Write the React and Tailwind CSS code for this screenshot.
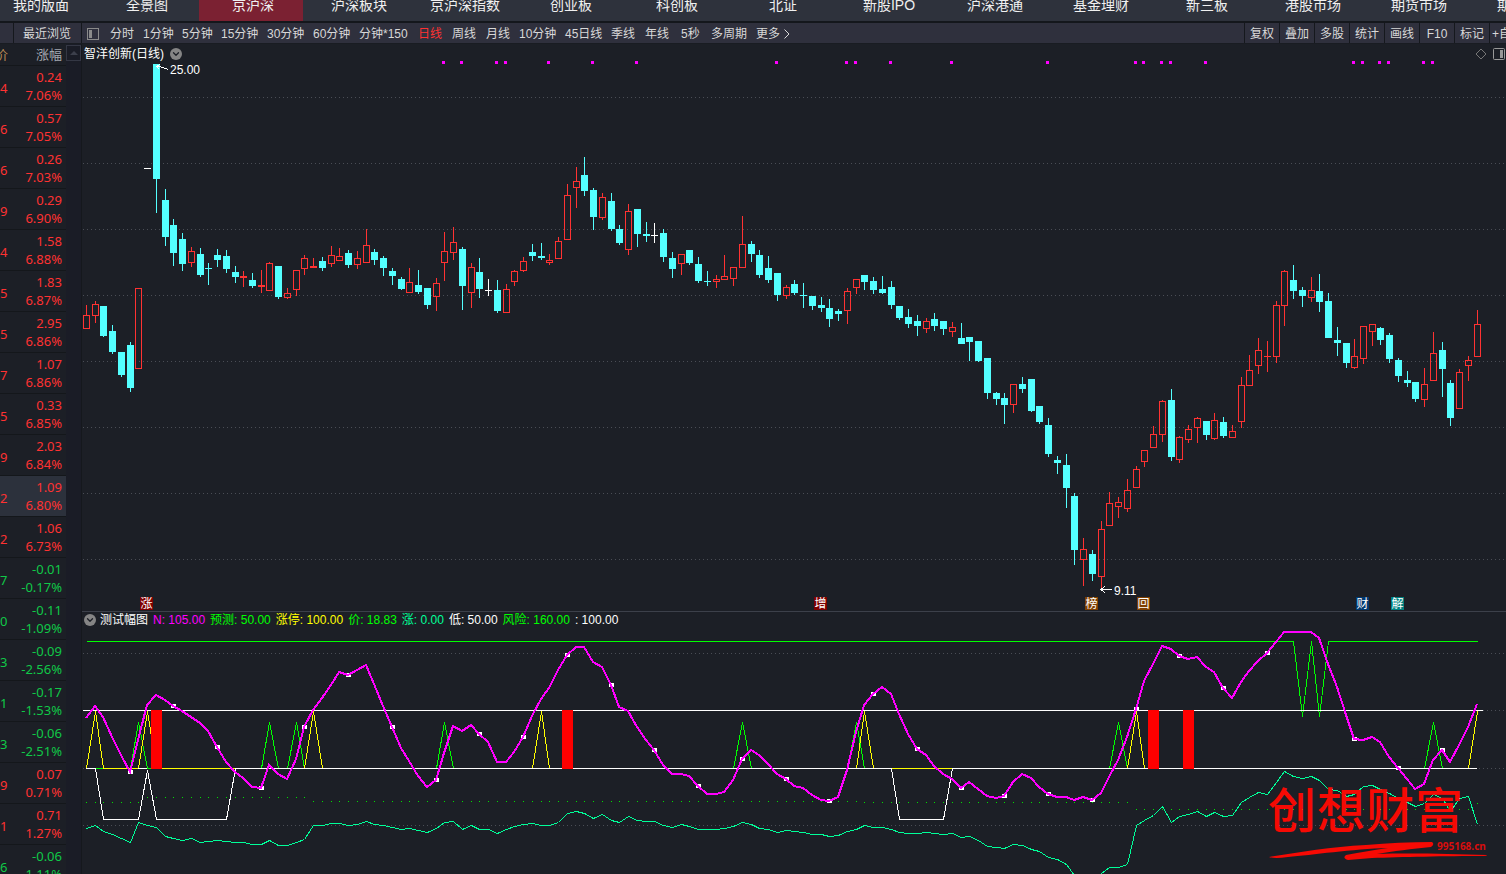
import { ChevronDown } from 'lucide-react';

const markets = [
  '我的版面', '全景图', '京沪深', '沪深板块', '京沪深指数', '创业板', '科创板', '北证',
  '新股IPO', '沪深港通', '基金理财', '新三板', '港股市场', '期货市场', '期权市场',
];

const periods = [
  ['分时', 'w-[33px]'], ['1分钟', 'w-[39px]'], ['5分钟', 'w-[39px]'], ['15分钟', 'w-[46px]'],
  ['30分钟', 'w-[46px]'], ['60分钟', 'w-[46px]'], ['分钟*150', 'w-[59px]'], ['日线', 'w-[34px]'],
  ['周线', 'w-[34px]'], ['月线', 'w-[33px]'], ['10分钟', 'w-[46px]'], ['45日线', 'w-[46px]'],
  ['季线', 'w-[34px]'], ['年线', 'w-[36px]'], ['5秒', 'w-[30px]'], ['多周期', 'w-[45px]'],
];

const tools = ['复权', '叠加', '多股', '统计', '画线', 'F10', '标记', '+自'];

// [last digit of price, change, change %]
const quotes = [
  ['4', '0.24', '7.06%'], ['6', '0.57', '7.05%'], ['6', '0.26', '7.03%'], ['9', '0.29', '6.90%'],
  ['4', '1.58', '6.88%'], ['5', '1.83', '6.87%'], ['5', '2.95', '6.86%'], ['7', '1.07', '6.86%'],
  ['5', '0.33', '6.85%'], ['9', '2.03', '6.84%'], ['2', '1.09', '6.80%'], ['2', '1.06', '6.73%'],
  ['7', '-0.01', '-0.17%'], ['0', '-0.11', '-1.09%'], ['3', '-0.09', '-2.56%'], ['1', '-0.17', '-1.53%'],
  ['3', '-0.06', '-2.51%'], ['9', '0.07', '0.71%'], ['1', '0.71', '1.27%'], ['6', '-0.06', '-1.11%'],
];

const indicators = [
  ['N: 105.00', 'text-[#ff00ff]'],
  ['预测: 50.00', 'text-[#00ff00]'],
  ['涨停: 100.00', 'text-[#ffff00]'],
  ['价: 18.83', 'text-[#00ff00]'],
  ['涨: 0.00', 'text-[#00ff99]'],
  ['低: 50.00', 'text-white'],
  ['风险: 160.00', 'text-[#00ff00]'],
  [': 100.00', 'text-white'],
];

// r = up, c = down, w = flat; then high, body top, body bottom, low
const candles = [
  ['r', 305, 315, 329, 329], ['r', 301, 304, 316, 323], ['c', 306, 306, 336, 337], ['c', 325, 331, 352, 354],
  ['c', 352, 352, 375, 377], ['c', 342, 345, 388, 392], ['r', 288, 288, 369, 369], ['w', 168, 168, 169, 169],
  ['c', 64, 64, 179, 213], ['c', 189, 200, 237, 246], ['c', 219, 225, 253, 266], ['c', 233, 239, 264, 271],
  ['r', 247, 251, 263, 267], ['c', 248, 254, 275, 277], ['c', 263, 268, 269, 285], ['c', 249, 255, 260, 267],
  ['c', 250, 256, 269, 273], ['c', 266, 272, 277, 283], ['r', 271, 276, 278, 287], ['c', 273, 280, 286, 288],
  ['r', 270, 285, 287, 293], ['r', 262, 263, 291, 291], ['c', 266, 266, 297, 299], ['r', 288, 293, 298, 299],
  ['r', 270, 270, 290, 296], ['r', 255, 258, 269, 275], ['r', 258, 266, 268, 268], ['c', 257, 261, 268, 271],
  ['r', 246, 255, 264, 267], ['r', 248, 256, 261, 261], ['c', 250, 253, 265, 268], ['r', 251, 258, 265, 269],
  ['r', 229, 245, 263, 263], ['c', 249, 252, 260, 265], ['c', 256, 258, 268, 276], ['c', 268, 271, 276, 285],
  ['c', 277, 279, 289, 290], ['r', 268, 282, 293, 293], ['c', 270, 285, 292, 294], ['c', 288, 288, 305, 309],
  ['r', 278, 283, 297, 311], ['r', 232, 251, 263, 281], ['r', 227, 242, 253, 260], ['c', 247, 249, 286, 310],
  ['r', 263, 267, 293, 308], ['c', 258, 272, 289, 298], ['w', 279, 290, 291, 296], ['c', 280, 290, 311, 313],
  ['r', 284, 289, 313, 313], ['r', 270, 271, 282, 286], ['r', 257, 261, 271, 272], ['c', 244, 252, 256, 261],
  ['c', 243, 256, 258, 260], ['r', 254, 260, 263, 265], ['r', 237, 241, 259, 259], ['r', 184, 195, 240, 240],
  ['r', 167, 181, 188, 208], ['c', 157, 175, 191, 196], ['c', 188, 190, 217, 230], ['r', 193, 197, 218, 220],
  ['c', 193, 201, 229, 231], ['c', 225, 229, 243, 245], ['r', 204, 211, 250, 255], ['c', 209, 209, 234, 247],
  ['c', 222, 234, 236, 242], ['w', 223, 235, 236, 243], ['c', 229, 233, 257, 262], ['c', 252, 258, 269, 278],
  ['r', 254, 254, 264, 275], ['c', 250, 250, 263, 265], ['c', 257, 264, 281, 283], ['c', 271, 281, 282, 286],
  ['r', 275, 279, 282, 288], ['r', 255, 276, 280, 280], ['r', 267, 267, 279, 286], ['r', 216, 244, 268, 268],
  ['c', 241, 244, 254, 262], ['c', 250, 255, 275, 278], ['c', 256, 268, 280, 283], ['c', 273, 273, 295, 301],
  ['r', 285, 287, 296, 299], ['c', 280, 284, 293, 295], ['c', 283, 295, 296, 308], ['c', 296, 296, 306, 310],
  ['c', 297, 305, 308, 312], ['c', 299, 308, 319, 327], ['c', 309, 311, 314, 321], ['r', 288, 291, 311, 324],
  ['r', 279, 279, 288, 294], ['c', 275, 275, 282, 290], ['c', 277, 281, 290, 294], ['c', 276, 289, 293, 294],
  ['c', 281, 287, 305, 309], ['c', 306, 306, 318, 320], ['c', 309, 317, 324, 328], ['c', 315, 321, 326, 336],
  ['r', 318, 321, 329, 333], ['c', 313, 319, 326, 331], ['c', 321, 321, 329, 335], ['r', 322, 327, 332, 337],
  ['c', 323, 338, 344, 344], ['c', 337, 337, 342, 361], ['c', 341, 341, 361, 362], ['c', 358, 358, 393, 399],
  ['c', 392, 393, 399, 405], ['c', 393, 398, 405, 424], ['r', 384, 384, 405, 413], ['c', 377, 384, 389, 393],
  ['c', 379, 379, 411, 412], ['c', 406, 406, 422, 424], ['c', 418, 425, 454, 457], ['c', 456, 460, 463, 474],
  ['c', 454, 465, 488, 508], ['c', 493, 496, 550, 565], ['r', 538, 549, 560, 586], ['c', 550, 554, 574, 581],
  ['r', 521, 529, 577, 588], ['r', 492, 503, 526, 526], ['r', 497, 502, 507, 518], ['r', 479, 490, 509, 512],
  ['r', 466, 469, 488, 488], ['r', 450, 450, 462, 467], ['r', 426, 434, 448, 448], ['r', 400, 401, 435, 442],
  ['c', 389, 400, 457, 461], ['r', 436, 437, 460, 463], ['r', 425, 429, 440, 443], ['r', 417, 418, 428, 443],
  ['c', 421, 421, 435, 440], ['r', 413, 420, 439, 440], ['c', 417, 422, 436, 438], ['r', 425, 431, 438, 438],
  ['r', 377, 385, 422, 428], ['r', 355, 370, 386, 386], ['r', 338, 350, 366, 374], ['r', 341, 356, 357, 372],
  ['r', 301, 305, 357, 363], ['r', 270, 271, 306, 326], ['c', 265, 280, 291, 299], ['c', 287, 290, 296, 307],
  ['r', 277, 290, 298, 302], ['c', 274, 291, 302, 312], ['c', 293, 301, 338, 338], ['c', 327, 340, 343, 356],
  ['c', 343, 343, 363, 368], ['r', 339, 356, 368, 369], ['r', 326, 326, 359, 364], ['r', 324, 324, 332, 346],
  ['c', 327, 328, 340, 345], ['c', 333, 335, 359, 363], ['c', 358, 360, 376, 382], ['c', 371, 380, 383, 387],
  ['c', 382, 382, 399, 402], ['r', 368, 384, 400, 407], ['r', 332, 353, 381, 381], ['c', 342, 350, 369, 397],
  ['c', 380, 383, 418, 426], ['r', 369, 372, 409, 409], ['r', 356, 360, 366, 381], ['r', 310, 324, 357, 357],
];

const trend = [
  718, 706, 717, 737, 755, 772, 740, 705, 695, 700, 706, 711, 717, 723, 731, 747, 762, 772, 778, 787,
  788, 765, 774, 779, 759, 727, 710, 698, 685, 672, 675, 670, 665, 684, 706, 727, 748, 761, 776, 787,
  780, 753, 726, 731, 725, 734, 742, 762, 762, 752, 737, 716, 699, 688, 670, 655, 647, 647, 662, 667,
  685, 707, 711, 727, 740, 750, 765, 774, 774, 776, 786, 794, 794, 792, 780, 759, 750, 755, 764, 774,
  779, 786, 788, 795, 800, 801, 797, 770, 732, 705, 694, 687, 694, 714, 734, 749, 755, 766, 774, 779,
  788, 782, 789, 796, 798, 796, 782, 774, 778, 787, 794, 797, 797, 800, 797, 800, 793, 777, 760, 737,
  709, 681, 664, 646, 649, 656, 659, 657, 667, 672, 688, 698, 682, 671, 661, 653, 642, 632, 632, 632,
  632, 638, 664, 687, 715, 739, 740, 737, 742, 757, 768, 779, 789, 784, 760, 750, 762, 745, 727, 704,
];

const price = [
  828, 825, 831, 834, 838, 842, 822, 825, 827, 836, 838, 840, 838, 842, 841, 840, 841, 842, 842, 844,
  844, 840, 845, 845, 842, 839, 825, 825, 823, 823, 825, 824, 821, 824, 825, 827, 829, 828, 830, 832,
  828, 822, 821, 829, 825, 829, 829, 833, 829, 826, 824, 823, 825, 825, 822, 813, 811, 813, 818, 814,
  820, 822, 816, 820, 821, 821, 825, 827, 824, 826, 829, 829, 829, 828, 826, 822, 824, 828, 829, 832,
  830, 831, 832, 834, 834, 836, 835, 831, 829, 825, 827, 827, 829, 832, 833, 833, 832, 833, 834, 833,
  837, 836, 840, 846, 847, 848, 844, 845, 849, 851, 857, 859, 864, 875, 882, 880, 873, 867, 867, 864,
  825, 820, 815, 806, 822, 816, 814, 811, 816, 812, 816, 815, 802, 797, 792, 794, 782, 771, 776, 778,
  776, 780, 789, 790, 796, 794, 786, 785, 789, 793, 798, 802, 806, 803, 794, 798, 811, 798, 796, 824,
];

const signals = [41, 43, 47, 48, 53, 58, 63, 79, 87, 88, 92, 99, 110, 120, 121, 123, 124, 128, 145, 146, 148, 149, 153, 154];

const events = [
  [140, '涨', 'fill-[#7f0000]'],
  [814, '增', 'fill-[#7f0000]'],
  [1085, '榜', 'fill-[#7f3f00]'],
  [1137, '回', 'fill-[#7f3f00]'],
  [1356, '财', 'fill-[#003870]'],
  [1391, '解', 'fill-[#007f7f]'],
];

const candleFill = { r: 'fill-[#ff3232]', c: 'fill-[#54ffff]', w: 'fill-white' };

const barX = (i) => Math.floor(86.288 + 8.748 * i);
const toPoints = (list) => list.map(([i, y]) => `${barX(i) + 0.5},${y + 0.5}`).join(' ');

function Candle({ i, data }) {
  const [kind, high, top, bottom, low] = data;
  const x = barX(i);
  const hollow = kind === 'r' && bottom - top > 2;
  return (
    <g className={candleFill[kind]}>
      {top > high && <rect x={x} y={high} width="1" height={top - high} />}
      {low > bottom && <rect x={x} y={bottom} width="1" height={low - bottom} />}
      {hollow ? (
        <rect x={x - 2.5} y={top + 0.5} width="6" height={bottom - top - 1} className="fill-none stroke-[#ff3232]" />
      ) : (
        <rect x={x - 3} y={top} width="7" height={bottom - top} />
      )}
    </g>
  );
}

function GridLine({ y }) {
  return <line x1="83" x2="1505" y1={y + 0.5} y2={y + 0.5} strokeDasharray="1 3" className="stroke-[#4a4d55]" />;
}

function CollapseButton({ label }) {
  return (
    <button type="button" aria-label={label} className="flex size-3 items-center justify-center rounded-full bg-[#858585] text-[#1c1f26]">
      <ChevronDown size={10} strokeWidth={3} />
    </button>
  );
}

function MarketTabs() {
  return (
    <nav className="-ml-[13px] flex h-[21px] shrink-0 bg-[#2e323c]">
      {markets.map((name) => (
        <button
          key={name}
          type="button"
          className={`flex w-[106px] shrink-0 justify-center border-r-2 border-[#2e323c] pl-1 text-[14px] leading-[11px] text-[#f0f0f0] ${name === '京沪深' ? 'bg-[#7b2132]' : ''}`}
        >
          {name}
        </button>
      ))}
    </nav>
  );
}

function Toolbar() {
  return (
    <div className="mt-0.5 flex h-[21px] shrink-0 border-b border-[#191c22] bg-[#2f303d] text-[12px] text-[#d8d8d8]">
      <div className="w-[14px] shrink-0 border-r border-[#15181d]" />
      <button type="button" className="w-[68px] shrink-0 border-r border-[#15181d] pr-px pt-px">最近浏览</button>
      <div className="flex flex-1 items-center pl-[5px] pt-px">
        <button type="button" aria-label="侧栏" className="mr-[11px]">
          <svg width="12" height="12" shapeRendering="crispEdges">
            <rect x="0.5" y="0.5" width="11" height="11" className="fill-none stroke-[#8a8a8a]" />
            <rect x="2" y="2" width="3" height="8" className="fill-[#8a8a8a]" />
          </svg>
        </button>
        {periods.map(([name, width]) => (
          <button
            key={name}
            type="button"
            className={`shrink-0 whitespace-nowrap text-left ${width} ${name === '日线' ? 'text-[#ff3232]' : ''}`}
          >
            {name}
          </button>
        ))}
        <button type="button" className="flex items-center gap-1 whitespace-nowrap">
          更多
          <svg width="6" height="10">
            <path d="M0.5 0.5L5 5L0.5 9.5" className="fill-none stroke-[#d8d8d8]" />
          </svg>
        </button>
      </div>
      {tools.map((name) => (
        <button
          key={name}
          type="button"
          className="w-[35px] shrink-0 overflow-hidden whitespace-nowrap border-l border-[#15181d] pt-px last:w-[17px] last:pl-0.5 last:text-left"
        >
          {name}
        </button>
      ))}
    </div>
  );
}

function QuoteList() {
  return (
    <aside className="flex w-[82px] shrink-0 overflow-hidden border-r border-[#15181d]">
      <table className="w-[66px] table-fixed self-start border-collapse text-[13px]">
        <thead>
          <tr className="h-[21px] border-b border-[#14171b] text-[#a4a8b0]">
            <th className="w-2 overflow-hidden p-0 font-normal text-[#b98a55]">
              <div className="flex justify-end">价</div>
            </th>
            <th className="p-0 pr-1 text-right font-normal">涨幅</th>
          </tr>
        </thead>
        <tbody>
          {quotes.map(([digit, change, percent], i) => {
            const down = change.startsWith('-');
            return (
              <tr
                key={i}
                className={`h-[41px] border-b border-[#14171b] leading-[18px] ${down ? 'text-[#10c848]' : 'text-[#ff3232]'} ${i === 10 ? 'bg-[#2c313c]' : ''}`}
              >
                <td className="p-0 pt-1">{digit}</td>
                <td className="p-0 pr-1 text-right">
                  <div>{change}</div>
                  <div>{percent}</div>
                </td>
              </tr>
            );
          })}
        </tbody>
      </table>
      <div className="flex-1 bg-[#1a1c26] pt-px">
        <button type="button" aria-label="向上滚动" className="flex h-4 w-full items-center justify-center border border-[#343744]">
          <svg width="8" height="4">
            <path d="M0 4L4 0L8 4Z" className="fill-[#3c3f4b]" />
          </svg>
        </button>
      </div>
    </aside>
  );
}

function PriceChart() {
  return (
    <section className="flex min-h-0 flex-1 flex-col">
      <header className="flex h-[17px] shrink-0 items-center gap-1.5 pl-0.5 pt-0.5 text-[12px] text-white">
        <h1>智洋创新(日线)</h1>
        <CollapseButton label="切换股票" />
        <button type="button" aria-label="标注" className="ml-auto">
          <svg width="12" height="12">
            <path d="M6 1L11 6L6 11L1 6Z" className="fill-none stroke-[#777]" />
          </svg>
        </button>
        <button type="button" aria-label="右侧栏" className="mr-px">
          <svg width="12" height="12">
            <rect x="0.5" y="0.5" width="11" height="11" rx="1" className="fill-none stroke-[#999]" />
            <rect x="7" y="2" width="3" height="8" className="fill-[#999]" />
          </svg>
        </button>
      </header>
      <svg className="min-h-0 w-full flex-1" viewBox="82 61 1424 550" preserveAspectRatio="none" shapeRendering="crispEdges">
        {[97, 163, 229, 295, 361, 427, 493, 559].map((y) => <GridLine key={y} y={y} />)}
        {signals.map((i) => (
          <rect key={i} x={barX(i) - 2} y="61" width="3" height="3" className="fill-[#ff00ff]" />
        ))}
        {candles.map((data, i) => <Candle key={i} i={i} data={data} />)}

        {/* high and low of the visible range */}
        <path d="M157 66.5H160L168 69.5M160 64L157 66.5L159 69" className="fill-none stroke-white" />
        <text x="170" y="74" className="fill-white text-[12px]">25.00</text>
        <path d="M1101 589.5H1112M1105 586L1101 589.5L1105 593" className="fill-none stroke-white" />
        <text x="1114" y="595" className="fill-white text-[12px]">9.11</text>

        {events.map(([x, label, fill]) => (
          <g key={label}>
            <rect x={x} y="597" width="13" height="13" className={fill} />
            <text x={x + 6.5} y="608" textAnchor="middle" className="fill-white text-[12px]">{label}</text>
          </g>
        ))}
      </svg>
    </section>
  );
}

function Spikes({ bars, top, className }) {
  return bars.map((i) => (
    <polyline key={i} points={toPoints([[i - 1, 768], [i, top], [i + 1, 768]])} className={className} />
  ));
}

const dotLevel = (i) => {
  if (i < 7) return 802;
  if (i < 26) return 797;
  if (i < 89) return 801;
  if (i < 120) return 802;
  return i < 159 ? 809 : 803;
};

function IndicatorChart() {
  return (
    <section className="flex h-[263px] shrink-0 flex-col border-t border-[#3c404a]">
      <header className="flex h-[17px] shrink-0 items-center gap-[5px] whitespace-nowrap pb-0.5 pl-0.5 text-[12px]">
        <CollapseButton label="切换指标" />
        <h2 className="-ml-px text-white">测试幅图</h2>
        {indicators.map(([text, color]) => <span key={text} className={color}>{text}</span>)}
      </header>
      <svg className="min-h-0 w-full flex-1" viewBox="82 629 1424 245" preserveAspectRatio="none">
        <g shapeRendering="crispEdges" className="fill-none">
          {[653, 710, 768, 825].map((y) => <GridLine key={y} y={y} />)}

          {/* risk line */}
          <polyline
            points={toPoints([[0, 641], [138, 641], [139, 716], [140, 641], [141, 716], [142, 641], [159, 641]])}
            className="stroke-[#00ff00]"
          />

          <Spikes bars={[6, 21, 24, 41, 75, 88, 118, 154]} top={722} className="stroke-[#00ff00]" />
          <Spikes bars={[1, 7, 26, 52, 89, 120]} top={711} className="stroke-[#ffff00]" />
          <polyline points={toPoints([[158, 768], [159, 711]])} className="stroke-[#ffff00]" />

          <path d="M83 710.5H1483M86 768.5H1477" className="stroke-white" />
          <path d="M95 768.5H103M147 768.5H151" className="stroke-[#00ff00]" />
          <path d="M103 768.5H138M162 768.5H235M892 768.5H952" className="stroke-[#ffff00]" />
          <polyline
            points={toPoints([[1, 768], [2, 819], [6, 819], [7, 770], [8, 819], [16, 819], [17, 768]])}
            className="stroke-white"
          />
          <polyline points={toPoints([[92, 768], [93, 819], [98, 819], [99, 768]])} className="stroke-white" />

          {price.map((_, i) => (
            <rect key={i} x={barX(i)} y={dotLevel(i)} width="1" height="1" className="fill-[#00e000]" />
          ))}
          <polyline points={toPoints(price.map((y, i) => [i, y]))} className="stroke-[#00ff99]" />

          {[8, 55, 122, 126].map((i) => (
            <rect key={i} x={barX(i) - 5} y="710" width="11" height="59" className="fill-[#ff0000]" />
          ))}

          {trend.map((y, i) => i > 0 && i % 5 === 0 && i !== 140 && (
            <rect key={i} x={barX(i) - 2} y={y - 2} width="5" height="4" className="fill-white" />
          ))}
          <polyline points={trend.map((y, i) => `${barX(i)},${y}`).join(' ')} strokeWidth="2" className="stroke-[#ff00ff]" />
        </g>

        {/* site mark */}
        <g className="fill-[#f60a04]">
          <text x="1268 1317 1366 1415" y="828" className="text-[48px] font-medium">创想财富</text>
          <path d="M1269 857C1300 852 1330 847 1366 845C1388 843 1410 842 1432 842Q1435 844 1431 847C1412 849 1393 851 1377 854C1412 853 1450 854 1487 855Q1487 856 1484 856C1446 856 1400 857 1372 858L1348 860Q1342 858 1346 855C1361 852 1374 850 1388 848C1352 849 1312 855 1288 857Q1275 859 1269 857Z" />
          <text x="1437" y="850" className="fill-[#d80d0d] font-['Noto_Sans'] text-[10px] font-bold">995168.cn</text>
        </g>
      </svg>
    </section>
  );
}

export default function App() {
  return (
    <div className="flex h-screen flex-col overflow-hidden bg-[#14171c] font-['Liberation_Sans','Noto_Sans_CJK_SC',sans-serif]">
      <MarketTabs />
      <Toolbar />
      <div className="flex min-h-0 flex-1 bg-[#1c1f26]">
        <div className="flex font-['Noto_Sans','Noto_Sans_CJK_SC',sans-serif]">
          <QuoteList />
        </div>
        <main className="flex min-w-0 flex-1 flex-col">
          <PriceChart />
          <IndicatorChart />
        </main>
      </div>
    </div>
  );
}
